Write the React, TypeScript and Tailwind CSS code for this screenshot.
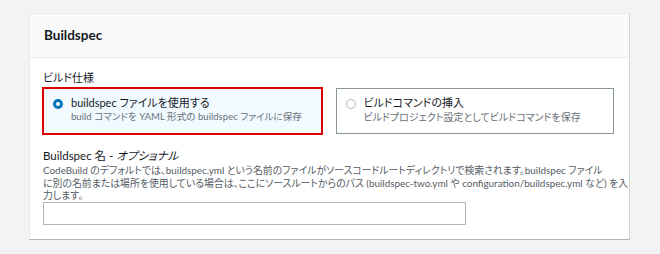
export default function App() {
  return (
    <div
      className="min-h-screen bg-[#f2f3f3] pt-[13px] pl-[29px] pr-[30px] [font-feature-settings:'palt']"
      style={{ fontFamily: 'Lato, "Noto Sans CJK JP", sans-serif' }}
    >
      <div className="w-[601px] bg-white border border-[#e4e7e7] border-r-[#d0d5d5] border-b-[#aab7b8]">
        {/* header */}
        <div className="h-[44px] bg-[#fafafa] border-b border-[#eaeded] px-[14px] flex items-center">
          <h2 className="text-[13.5px] font-bold text-[#16191f]">Buildspec</h2>
        </div>

        <div className="pl-[13px] pr-[15px] pt-[13px] pb-[14px]">
          <div className="text-[11px] leading-[14px] text-[#16191f] mb-[3px]">ビルド仕様</div>

          <div className="grid grid-cols-2 gap-x-[14px]">
            <div className="-m-px h-[48px] border-2 border-[#dd0000] bg-[#f1faff] flex items-start gap-[8px] pl-[9px] pt-[7px]">
              <span className="mt-[3px] w-[10px] h-[10px] shrink-0 rounded-full border-[3px] border-[#0073bb] bg-white" />
              <div className="whitespace-nowrap">
                <div className="text-[11px] leading-[14px] text-[#16191f]">buildspec ファイルを使用する</div>
                <div className="text-[9.6px] leading-[14px] text-[#687078]">
                  build コマンドを YAML 形式の buildspec ファイルに保存
                </div>
              </div>
            </div>

            <div className="h-[46px] border border-[#879596] bg-white flex items-start gap-[8px] pl-[9px] pt-[7px]">
              <span className="mt-[3px] w-[10px] h-[10px] shrink-0 rounded-full border border-[#aab7b8] bg-white" />
              <div className="whitespace-nowrap">
                <div className="text-[11px] leading-[14px] text-[#16191f]">ビルドコマンドの挿入</div>
                <div className="text-[10px] leading-[14px] text-[#687078]">
                  ビルドプロジェクト設定としてビルドコマンドを保存
                </div>
              </div>
            </div>
          </div>

          <div className="mt-[14px] text-[11.5px] leading-[16px] text-[#16191f]">
            Buildspec 名 - <i>オプショナル</i>
          </div>
          <p className="text-[9.9px] leading-[12.5px] text-[#545b64] whitespace-nowrap">
            CodeBuild のデフォルトでは、buildspec.yml という名前のファイルがソースコードルートディレクトリで検索されます。buildspec ファイル
            <br />
            に別の名前または場所を使用している場合は、ここにソースルートからのパス (buildspec-two.yml や configuration/buildspec.yml など) を入
            <br />
            力します。
          </p>
          <input
            type="text"
            className="block w-[423px] h-[23px] border border-[#aab7b8] bg-white outline-none"
          />
        </div>
      </div>
    </div>
  );
}
